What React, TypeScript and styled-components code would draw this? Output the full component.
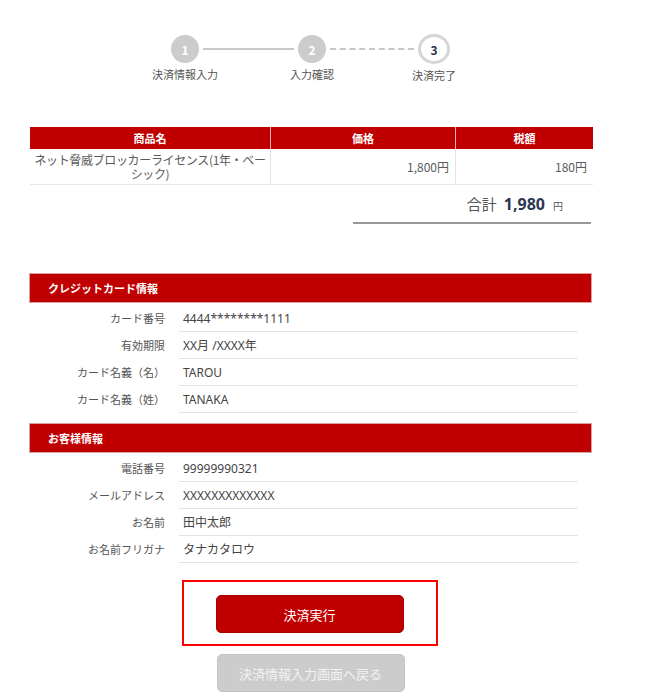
import styled, { createGlobalStyle } from "styled-components";

const GlobalStyle = createGlobalStyle`
  html, body {
    margin: 0;
    padding: 0;
    background: #fff;
  }
  body {
    font-family: "Noto Sans CJK JP", "Noto Sans", "Liberation Sans", sans-serif;
    color: #555;
  }
`;

const RED = "#c00000";

const Page = styled.div`
  width: 561px;
  padding: 35px 0 8px 30px;
`;

// ステッパー
const Stepper = styled.div`
  display: flex;
  align-items: flex-start;
  margin-left: 141px;
  height: 92px;
`;

const Step = styled.div<{ $size: number }>`
  width: ${(p) => p.$size}px;
  display: flex;
  flex-direction: column;
  align-items: center;
`;

const Circle = styled.div<{ $current?: boolean }>`
  box-sizing: border-box;
  width: 100%;
  height: ${(p) => (p.$current ? 30 : 28)}px;
  margin-top: ${(p) => (p.$current ? -1 : 0)}px;
  border-radius: 50%;
  display: flex;
  align-items: center;
  justify-content: center;
  font-size: 12px;
  font-weight: bold;
  background: ${(p) => (p.$current ? "#fff" : "#ccc")};
  border: ${(p) => (p.$current ? "3px solid #d6d6d6" : "none")};
  color: ${(p) => (p.$current ? "#2c3344" : "#fff")};
`;

const StepLabel = styled.div`
  white-space: nowrap;
  font-size: 11px;
  color: #555;
  margin-top: 3px;
`;

const Connector = styled.div<{ $width: number; $dashed?: boolean }>`
  width: ${(p) => p.$width}px;
  margin: 13px 4px 0;
  border-top: 2px ${(p) => (p.$dashed ? "dashed" : "solid")} #c8c8c8;
`;

// 商品テーブル
const ItemTable = styled.table`
  width: 561px;
  border-collapse: collapse;
  table-layout: fixed;
  font-size: 12px;
`;

const HeadCell = styled.th<{ $w: number }>`
  width: ${(p) => p.$w}px;
  height: 22px;
  padding: 0;
  background: ${RED};
  color: #fff;
  font-size: 11px;
  font-weight: bold;
  text-align: center;
  border-left: 1px solid #e6b3b3;
  &:first-child {
    border-left: none;
  }
`;

const BodyCell = styled.td<{ $align: "center" | "right" }>`
  height: 35px;
  padding: 0 6px;
  color: #5a5a5a;
  line-height: 14px;
  text-align: ${(p) => p.$align};
  border-bottom: 1px solid #e8e8e8;
  border-left: 1px solid #e3e3e3;
  &:first-child {
    border-left: none;
    padding: 0 3px;
    letter-spacing: -0.35px;
  }
`;

const TotalRow = styled.div`
  display: flex;
  justify-content: flex-end;
  align-items: baseline;
  gap: 7px;
  padding: 8px 28px 0 0;
  height: 29px;
`;

const TotalLabel = styled.span`
  font-size: 15px;
  color: #555;
`;

const TotalValue = styled.span`
  font-size: 16px;
  font-weight: bold;
  color: #2b3650;
  font-family: "Noto Sans", "Liberation Sans", sans-serif;
`;

const TotalUnit = styled.span`
  font-size: 10px;
  color: #555;
  margin-left: 1px;
`;

const TotalRule = styled.div`
  margin-left: 323px;
  height: 2px;
  background: #999;
`;

// 情報セクション
const Section = styled.section<{ $top: number }>`
  margin-top: ${(p) => p.$top}px;
`;

const SectionHeader = styled.div`
  height: 28px;
  background: ${RED};
  color: #fff;
  font-size: 11px;
  font-weight: bold;
  display: flex;
  align-items: center;
  padding-left: 18px;
  box-shadow: 0 0 0 1px #d9a0a0;
`;

const InfoList = styled.dl`
  margin: 3px 0 0;
  display: grid;
  grid-template-columns: 149px 399px;
`;

const InfoLabel = styled.dt`
  height: 26px;
  padding-right: 14px;
  display: flex;
  align-items: center;
  justify-content: flex-end;
  font-size: 11px;
  color: #555;
`;

const InfoValue = styled.dd`
  margin: 0;
  height: 26px;
  padding-left: 4px;
  display: flex;
  align-items: center;
  font-size: 12px;
  color: #444;
  border-bottom: 1px solid #e3e3e3;
  font-family: "Noto Sans", "Noto Sans CJK JP", sans-serif;
`;

// ボタン
const Actions = styled.div`
  display: flex;
  flex-direction: column;
  align-items: center;
  margin-top: 17px;
  gap: 8px;
`;

const Highlight = styled.div`
  box-sizing: border-box;
  width: 256px;
  height: 66px;
  margin-left: -2px;
  border: 2px solid #ff0000;
  display: flex;
  justify-content: center;
  padding-top: 13px;
`;

const Button = styled.button<{ $variant: "primary" | "disabled" }>`
  width: 188px;
  height: 38px;
  border-radius: 5px;
  border: 1px solid ${(p) => (p.$variant === "primary" ? "#a80000" : "#c4c4c4")};
  background: ${(p) => (p.$variant === "primary" ? RED : "#cccccc")};
  color: ${(p) => (p.$variant === "primary" ? "#fff" : "#f2f2f2")};
  font-family: "Noto Sans CJK JP", sans-serif;
  font-size: 13px;
  cursor: pointer;
`;

const cardInfo: [string, string][] = [
  ["カード番号", "4444********1111"],
  ["有効期限", "XX月 /XXXX年"],
  ["カード名義（名）", "TAROU"],
  ["カード名義（姓）", "TANAKA"],
];

const customerInfo: [string, string][] = [
  ["電話番号", "99999990321"],
  ["メールアドレス", "XXXXXXXXXXXXX"],
  ["お名前", "田中太郎"],
  ["お名前フリガナ", "タナカタロウ"],
];

const InfoBlock = ({ rows }: { rows: [string, string][] }) => (
  <InfoList>
    {rows.map(([label, value]) => [
      <InfoLabel key={label + "-l"}>{label}</InfoLabel>,
      <InfoValue key={label + "-v"}>{value}</InfoValue>,
    ])}
  </InfoList>
);

export default function App() {
  return (
    <>
      <GlobalStyle />
      <Page>
        <Stepper>
          <Step $size={28}>
            <Circle>1</Circle>
            <StepLabel>決済情報入力</StepLabel>
          </Step>
          <Connector $width={91} />
          <Step $size={28}>
            <Circle>2</Circle>
            <StepLabel>入力確認</StepLabel>
          </Step>
          <Connector $width={84} $dashed />
          <Step $size={32}>
            <Circle $current>3</Circle>
            <StepLabel>決済完了</StepLabel>
          </Step>
        </Stepper>

        <ItemTable>
          <thead>
            <tr>
              <HeadCell $w={240}>商品名</HeadCell>
              <HeadCell $w={184}>価格</HeadCell>
              <HeadCell $w={137}>税額</HeadCell>
            </tr>
          </thead>
          <tbody>
            <tr>
              <BodyCell $align="center">ネット脅威ブロッカーライセンス(1年・ベーシック)</BodyCell>
              <BodyCell $align="right">1,800円</BodyCell>
              <BodyCell $align="right">180円</BodyCell>
            </tr>
          </tbody>
        </ItemTable>

        <TotalRow>
          <TotalLabel>合計</TotalLabel>
          <TotalValue>1,980</TotalValue>
          <TotalUnit>円</TotalUnit>
        </TotalRow>
        <TotalRule />

        <Section $top={50}>
          <SectionHeader>クレジットカード情報</SectionHeader>
          <InfoBlock rows={cardInfo} />
        </Section>

        <Section $top={11}>
          <SectionHeader>お客様情報</SectionHeader>
          <InfoBlock rows={customerInfo} />
        </Section>

        <Actions>
          <Highlight>
            <Button $variant="primary">決済実行</Button>
          </Highlight>
          <Button $variant="disabled">決済情報入力画面へ戻る</Button>
        </Actions>
      </Page>
    </>
  );
}
